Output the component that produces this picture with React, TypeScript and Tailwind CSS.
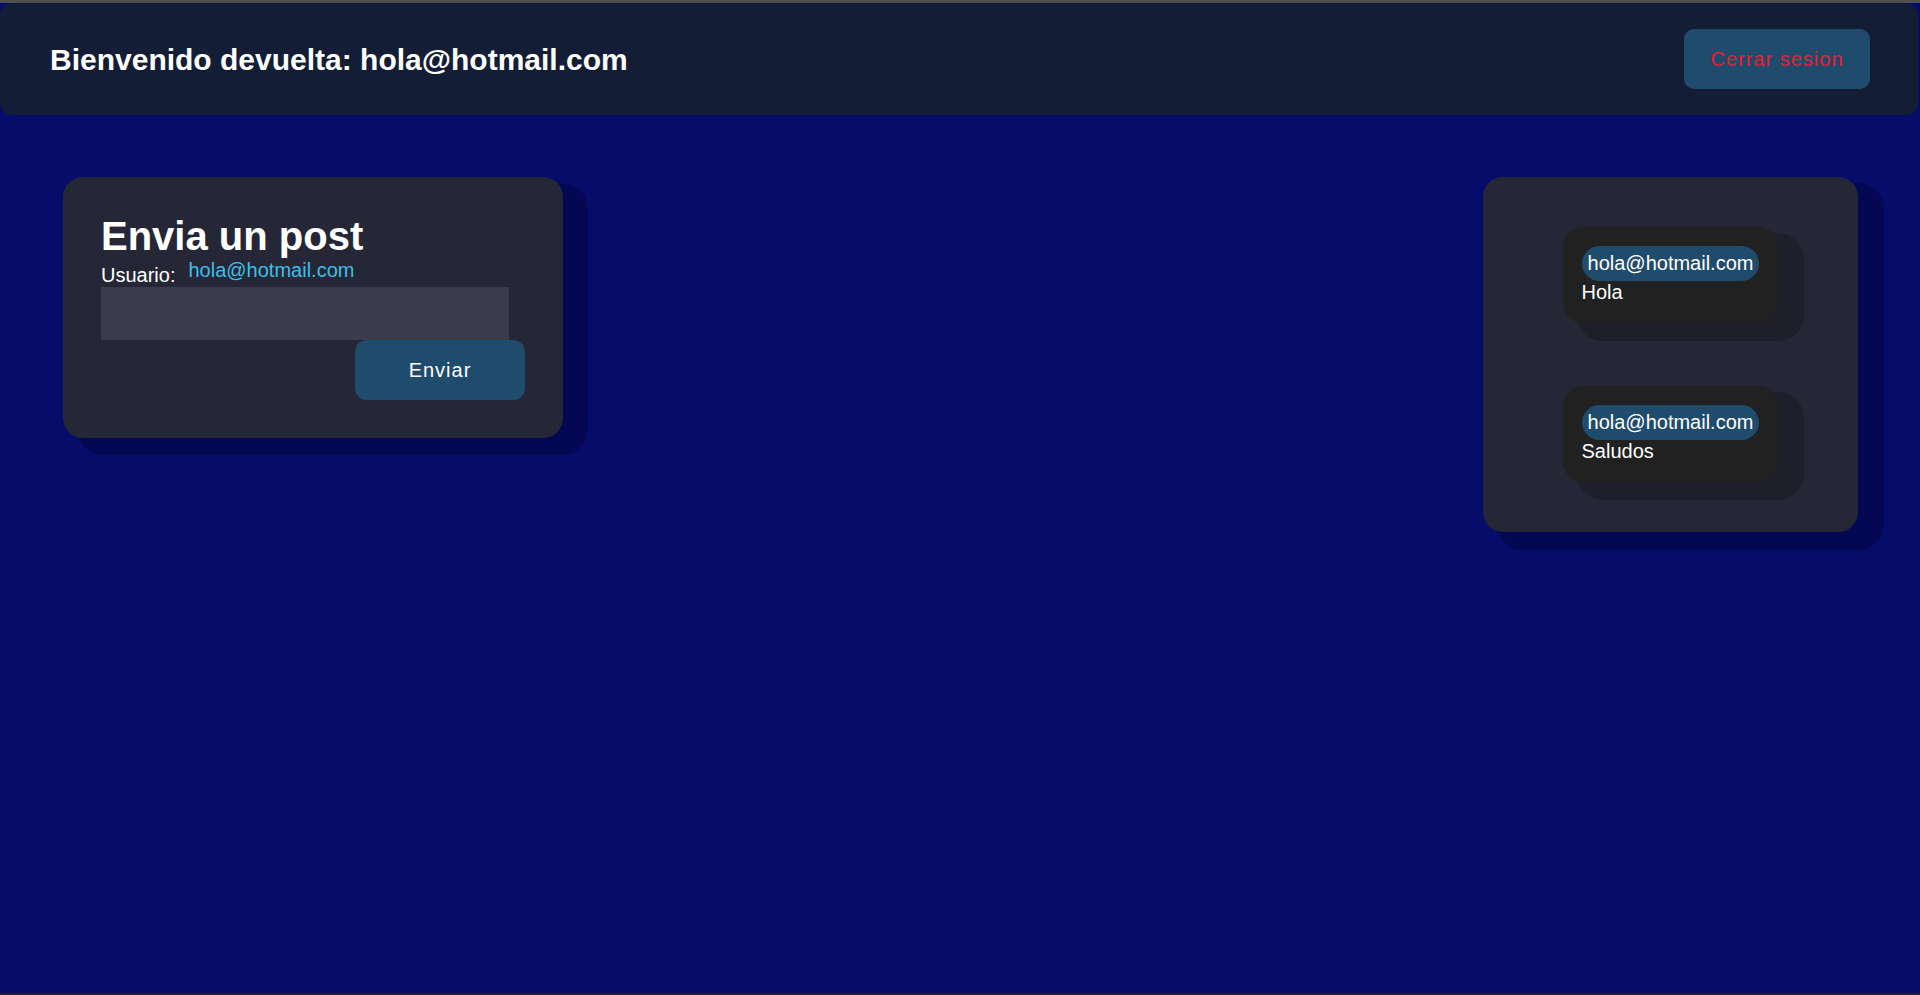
import React from "react";

const posts = [
  { user: "hola@hotmail.com", text: "Hola" },
  { user: "hola@hotmail.com", text: "Saludos" },
];

const PostItem = ({ user, text }: { user: string; text: string }) => {
  return (
    <div className="rounded-[20px] bg-[#212121] px-[19px] py-[19px] shadow-[20px_12px_0_6px_#1f1f2b]">
      <div className="inline-block rounded-full bg-[#1f4b6c] px-[6px] py-[6px] text-[20px] leading-[23px] text-white">
        {user}
      </div>
      <div className="text-[20px] leading-[23px] text-white">{text}</div>
    </div>
  );
};

export default function App() {
  return (
    <div
      className="flex h-[995px] flex-col bg-[#060c69]"
      style={{ fontFamily: '"Liberation Sans", Arial, sans-serif' }}
    >
      <div className="h-[3px] bg-[#505050]" />
      <header className="mr-[2px] flex h-[112px] items-center justify-between rounded-[12px] bg-[#141d36] pl-[50px] pr-[48px]">
        <h1 className="text-[30px] font-bold text-white">
          Bienvenido devuelta: hola@hotmail.com
        </h1>
        <button className="h-[60px] w-[186px] rounded-[10px] bg-[#1f4b6c] text-[20px] tracking-[1px] text-[#ec1c34]">
          Cerrar sesion
        </button>
      </header>

      <main className="flex flex-1 items-start justify-between pl-[63px] pr-[62px] pt-[62px]">
        <section className="w-[500px] rounded-[20px] bg-[#252736] px-[38px] pb-[38px] pt-[37px] shadow-[20px_12px_0_5px_#040853]">
          <h2 className="text-[40px] font-bold leading-[45px] text-white">
            Envia un post
          </h2>
          <div className="flex items-end gap-[13px]">
            <span className="text-[20px] leading-[23px] text-white">Usuario:</span>
            <span className="pb-[5px] text-[20px] leading-[23px] text-[#3bbfe9]">
              hola@hotmail.com
            </span>
          </div>
          <textarea className="block h-[53px] w-[408px] resize-none bg-[#3a3b4b] text-white outline-none" />
          <div className="flex justify-end">
            <button className="h-[60px] w-[170px] rounded-[12px] bg-[#1f4b6c] text-[20px] tracking-[1px] text-white">
              Enviar
            </button>
          </div>
        </section>

        <section className="flex w-[375px] flex-col items-center gap-[63px] rounded-[20px] bg-[#252736] py-[50px] shadow-[20px_12px_0_6px_#040853]">
          {posts.map((p, i) => (
            <PostItem key={i} user={p.user} text={p.text} />
          ))}
        </section>
      </main>
      <div className="h-[2px] bg-[#231e2e]" />
    </div>
  );
}
